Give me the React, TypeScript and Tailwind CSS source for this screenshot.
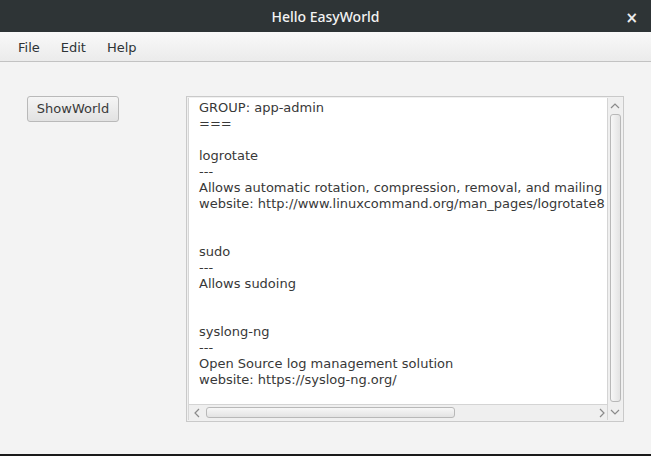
import { type FC } from "react";

const lines = [
  "GROUP: app-admin",
  "===",
  "",
  "logrotate",
  "---",
  "Allows automatic rotation, compression, removal, and mailing",
  "website: http://www.linuxcommand.org/man_pages/logrotate8",
  "",
  "",
  "sudo",
  "---",
  "Allows sudoing",
  "",
  "",
  "syslong-ng",
  "---",
  "Open Source log management solution",
  "website: https://syslog-ng.org/",
];

const Chevron: FC<{ dir: "up" | "down" | "left" | "right" }> = ({ dir }) => {
  const d = {
    up: "M1 6 L5 2 L9 6",
    down: "M1 2 L5 6 L9 2",
    left: "M6 1 L2 5 L6 9",
    right: "M2 1 L6 5 L2 9",
  }[dir];
  const vertical = dir === "up" || dir === "down";
  return (
    <svg
      width={vertical ? 10 : 8}
      height={vertical ? 8 : 10}
      viewBox={vertical ? "0 0 10 8" : "0 0 8 10"}
      fill="none"
      stroke="#8a8a8a"
      strokeWidth="1.2"
    >
      <path d={d} />
    </svg>
  );
};

const TextArea: FC = () => {
  return (
    <div className="w-[438px] h-[326px] border border-[#c9c9c9] bg-[#f0f0f0] p-px flex">
      <div className="flex-1 flex flex-col border-l border-[#d6d6d6] min-w-0">
        <div className="flex-1 bg-white overflow-hidden pl-[10px] pt-[2px]">
          {lines.map((line, i) => (
            <div key={i} className="h-4 leading-4 whitespace-pre text-[13px] text-[#383838]">
              {line}
            </div>
          ))}
        </div>
        <div className="h-[16px] bg-[#efefef] border-t border-[#d4d4d4] flex items-center gap-[5px] pl-[4px] pr-[1px]">
          <Chevron dir="left" />
          <div className="w-[249px] h-[11px] rounded-[3px] border border-[#b8b8b8] bg-gradient-to-b from-[#f7f7f7] to-[#e3e3e3]" />
          <div className="flex-1" />
          <Chevron dir="right" />
        </div>
      </div>
      <div className="w-[15px] bg-[#efefef] border-l border-[#d4d4d4] flex flex-col items-center pt-[4px] pb-[4px]">
        <Chevron dir="up" />
        <div className="mt-[4px] w-[11px] h-[288px] rounded-[3px] border border-[#b8b8b8] bg-gradient-to-r from-[#f7f7f7] to-[#e3e3e3]" />
        <div className="flex-1" />
        <Chevron dir="down" />
      </div>
    </div>
  );
};

const App: FC = () => {
  return (
    <div
      className="w-[651px] h-[456px] flex flex-col bg-[#f3f3f3] overflow-hidden"
      style={{ fontFamily: '"DejaVu Sans", sans-serif' }}
    >
      <div className="h-8 bg-[#2e3436] flex items-center relative">
        <div
          className="flex-1 text-center text-[#f3f3f3] text-[14px] font-medium"
          style={{ fontFamily: '"Noto Sans", sans-serif' }}
        >
          Hello EasyWorld
        </div>
        <div className="absolute right-[13px] top-[7px] text-[#eeeeee] text-[15px] font-bold">×</div>
      </div>
      <div className="h-[30px] bg-gradient-to-b from-[#f9f9f9] to-[#ebebeb] border-b border-[#c2c2c2] flex items-center pt-[3px] pl-[18px] gap-[21px] text-[13px] text-[#2e3436]">
        <span>File</span>
        <span>Edit</span>
        <span>Help</span>
      </div>
      <div className="flex-1 flex pt-[34px] pl-[27px]">
        <button className="w-[92px] h-[26px] rounded-[3px] border border-[#b9b9b9] bg-gradient-to-b from-[#f5f5f5] to-[#e2e2e2] text-[13px] text-[#3a3a3a]">
          ShowWorld
        </button>
        <div className="ml-[67px]">
          <TextArea />
        </div>
      </div>
      <div className="h-[2px] bg-[#1a1a1a]" />
    </div>
  );
};

export default App;
